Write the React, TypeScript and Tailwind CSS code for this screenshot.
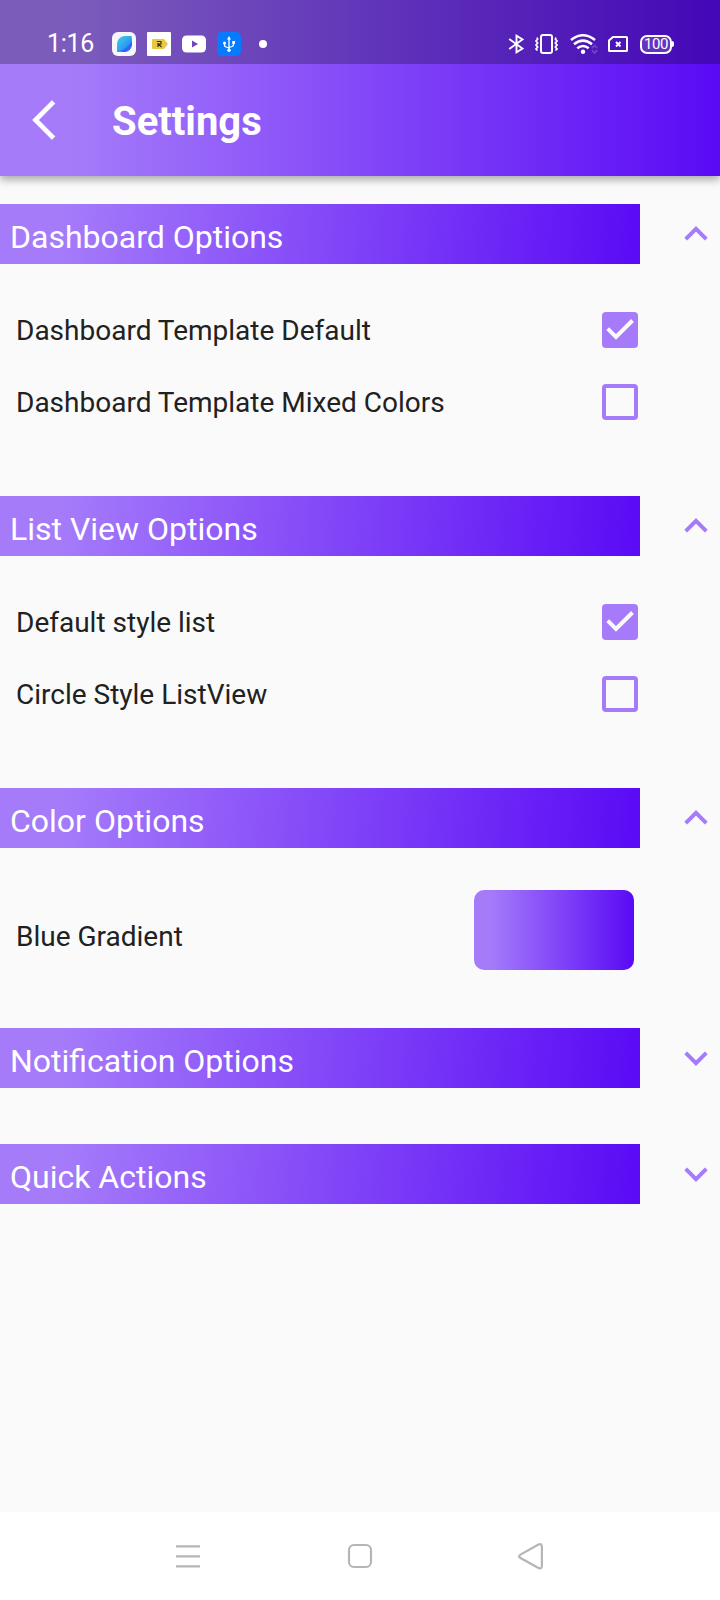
import { useState, type ReactNode } from "react";

function StatusBar() {
  return (
    <div className="flex h-16 items-start bg-black/25 pt-6 pl-[47px] text-white">
      <div className="flex h-10 w-[65px] items-center text-[25px] leading-10 tracking-[-0.3px]">
        1:16
      </div>
      <div className="flex h-10 items-center gap-[11px]">
        <svg className="size-6" viewBox="0 0 24 24">
          <defs>
            <linearGradient id="leaf" x1="0" y1="0" x2="1" y2="1">
              <stop offset="0" stopColor="#3fd0ee" />
              <stop offset="0.6" stopColor="#2b9cf0" />
              <stop offset="1" stopColor="#2b5cf5" />
            </linearGradient>
          </defs>
          <rect width="24" height="24" rx="6" fill="#f7f7f9" />
          <path d="M5 20V12C5 7 9 4 13 4H19.500C20 7 20 9 20 12C20 17 16 20 12 20Z" fill="url(#leaf)" />
          <path d="M8 19C13 17.500 17 14 19.800 9C21 15 17 20 12 20Z" fill="#2d66fa" />
        </svg>
        <svg className="size-6" viewBox="0 0 24 24">
          <rect width="24" height="24" rx="1" fill="#fff" />
          <path d="M6 7H17L21 12L17 17H6Q5 17 5 16V8Q5 7 6 7Z" fill="#e8c840" />
          <path d="M11 15V11M9.800 9.500H14V12H11.500L14.500 15" fill="none" stroke="#3b341c" strokeWidth="1.200" />
        </svg>
        <svg className="size-6" viewBox="0 0 24 24">
          <rect y="3.500" width="24" height="17" rx="4.500" fill="#fff" />
          <path d="M10 8.500V15.500L16 12Z" fill="#7048b6" />
        </svg>
        <svg className="size-6" viewBox="0 0 24 24">
          <rect width="24" height="24" rx="5" fill="#067bff" />
          <g fill="none" stroke="#fff" strokeWidth="1.300">
            <path d="M12 6V18M7.500 11.500V13Q7.500 14.500 9 15L12 16M16.500 11V12.500Q16.500 14 15 14.500L12 15.500" />
          </g>
          <path d="M12 4L14 7.500H10Z" fill="#fff" />
          <circle cx="12" cy="18.300" r="1.700" fill="#fff" />
          <circle cx="7.500" cy="11" r="1.500" fill="#fff" />
          <rect x="15.200" y="9" width="2.800" height="2.800" fill="#fff" />
        </svg>
        <span className="ml-[7px] size-2 rounded-full bg-white" />
      </div>
      <div className="mr-[46px] ml-auto flex h-10 items-center">
        <svg className="h-5 w-4" viewBox="0 0 16 20" fill="none" stroke="#fff" strokeWidth="1.900">
          <path d="M1.200 5L14.500 14.500L8.500 18.300V1.700L14.500 5.500L1.200 15" />
        </svg>
        <svg className="ml-[10px] h-5 w-6" viewBox="0 0 24 20" fill="none" stroke="#fff">
          <rect x="7" y="1" width="11" height="18" rx="2" strokeWidth="2" />
          <path
            d="M3 3.500L3.700 5L2 7L3.700 9L2 11L3.700 13L2 15L3.500 16.500M22 3.500L21.300 5L23 7L21.300 9L23 11L21.300 13L23 15L21.500 16.500"
            strokeWidth="1.700"
          />
        </svg>
        <svg className="ml-3 h-5 w-7" viewBox="0 0 28 20" fill="none" stroke="#fff">
          <path d="M1 6Q13 -3.500 25 6M4 10.200Q13 3 22 10.200M7.300 14.300Q13 9.700 18.700 14.300" strokeWidth="2.500" />
          <circle cx="13" cy="17.800" r="2.200" fill="#fff" stroke="none" />
          <path d="M22 14.200L24.600 11.400L27.200 14.200M22 16.200L24.600 19L27.200 16.200" stroke="#7145cb" strokeWidth="1.700" />
        </svg>
        <svg className="ml-[10px] h-5 w-5" viewBox="0 0 20 20" fill="none" stroke="#fff">
          <path d="M5 3H18.500Q19 3 19 3.500V16.500Q19 17 18.500 17H1.500Q1 17 1 16.500V6.500Z" strokeWidth="2" />
          <path d="M8 8L12.500 12.500M12.500 8L8 12.500" strokeWidth="1.800" />
        </svg>
        <div className="ml-3 flex items-center">
          <div className="flex h-[19px] w-8 items-center justify-center rounded-[7px] border-2 border-white bg-white/15 text-[15px] leading-none tracking-[-0.4px]">
            100
          </div>
          <div className="h-[6px] w-[2px] rounded-r-sm bg-white" />
        </div>
      </div>
    </div>
  );
}

function AppBar() {
  return (
    <header className="relative bg-[linear-gradient(90deg,#a57bfa_10%,#5a0af5_100%)] shadow-[0_4px_8px_rgba(0,0,0,0.32)]">
      <StatusBar />
      <div className="flex h-28 items-center text-white">
        <svg className="ml-8 h-10 w-6" viewBox="0 0 24 40" fill="none" stroke="#fff" strokeWidth="4.800">
          <path d="M21.600 1.900L3.500 20L21.600 38.100" />
        </svg>
        <h1 className="ml-14 pt-1 text-[40px] leading-[48px] font-bold">Settings</h1>
      </div>
    </header>
  );
}

type SectionProps = { title: string; defaultOpen?: boolean; children?: ReactNode };

function Section({ title, defaultOpen = false, children }: SectionProps) {
  const [open, setOpen] = useState(defaultOpen);
  return (
    <section>
      <button type="button" onClick={() => setOpen(!open)} className="flex w-full items-center text-left">
        <span className="h-[60px] w-[640px] bg-[linear-gradient(95.36deg,#a57bfa_10%,#5a0af5_100%)] pt-[3px] pl-[10px] text-[32px] leading-[60px] text-white">
          {title}
        </span>
        <svg className="ml-11 h-6 w-6" viewBox="0 0 24 24" fill="none" stroke="#a57bfa" strokeWidth="4">
          {open ? <path d="M1.700 17.200L12 6.900L22.300 17.200" /> : <path d="M1.700 6.800L12 17.100L22.300 6.800" />}
        </svg>
      </button>
      {open && children}
    </section>
  );
}

function CheckRow({ label, initial = false }: { label: string; initial?: boolean }) {
  const [checked, setChecked] = useState(initial);
  return (
    <button
      type="button"
      role="checkbox"
      aria-checked={checked}
      onClick={() => setChecked(!checked)}
      className="flex h-[72px] w-[638px] items-center justify-between pl-4 text-left text-[28px] text-[#212121]"
    >
      <span className="pt-[2px]">{label}</span>
      {checked ? (
        <svg className="size-9 rounded-[4px] bg-[#a57bfa]" viewBox="0 0 36 36" fill="none" stroke="#fafafa" strokeWidth="4">
          <path d="M5.700 16.700L14 25L30.500 8.500" />
        </svg>
      ) : (
        <span className="size-9 rounded-[4px] border-4 border-[#a57bfa]" />
      )}
    </button>
  );
}

function NavBar() {
  return (
    <nav className="flex h-[88px] items-center justify-center bg-white">
      <svg className="h-8 w-[376px]" viewBox="0 0 376 32" fill="none" stroke="#b5b5b5" strokeWidth="2.200">
        <path d="M4 6.400H28M4 16.400H28M4 26.400H28" />
        <rect x="177" y="5" width="22" height="22" rx="5" />
        <path d="M348.500 14.600L366 4.700Q369.700 3 369.900 6.500V26Q369.700 29.500 366 27.800L348.500 18Q345.700 16.300 348.500 14.600Z" />
      </svg>
    </nav>
  );
}

export default function App() {
  return (
    <div className="flex h-[1600px] w-[720px] flex-col bg-[#fafafa] font-[Roboto,sans-serif]">
      <AppBar />
      <main className="flex flex-1 flex-col gap-14 pt-7">
        <Section title="Dashboard Options" defaultOpen>
          <div className="pt-[30px] pb-[2px]">
            <CheckRow label="Dashboard Template Default" initial />
            <CheckRow label="Dashboard Template Mixed Colors" />
          </div>
        </Section>
        <Section title="List View Options" defaultOpen>
          <div className="pt-[30px] pb-[2px]">
            <CheckRow label="Default style list" initial />
            <CheckRow label="Circle Style ListView" />
          </div>
        </Section>
        <Section title="Color Options" defaultOpen>
          <div className="flex w-[634px] items-center justify-between pt-[42px] pb-[2px] pl-4">
            <span className="pt-[14px] text-[28px] text-[#212121]">Blue Gradient</span>
            <span className="h-20 w-40 rounded-[10px] bg-[linear-gradient(90deg,#a57bfa_10%,#5a0af5_100%)]" />
          </div>
        </Section>
        <Section title="Notification Options" />
        <Section title="Quick Actions" />
      </main>
      <NavBar />
    </div>
  );
}
